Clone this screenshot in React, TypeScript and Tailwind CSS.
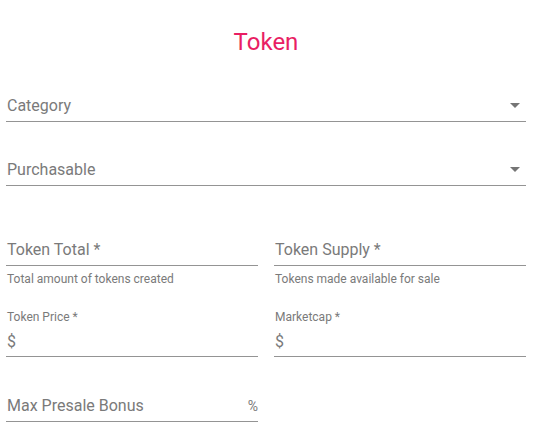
import React from "react"

function ArrowDrop() {
  return (
    <svg viewBox="0 0 24 24" className="h-6 w-6 shrink-0 fill-[#757575]">
      <path d="M7 10l5 5 5-5z" />
    </svg>
  )
}

function SelectField({ label }: { label: string }) {
  return (
    <div className="flex h-[33px] items-center border-b border-[#949494] pl-px">
      <span className="flex-1 pt-[2px] text-base text-[#7a7a7a]">{label}</span>
      <span className="-mr-px">
        <ArrowDrop />
      </span>
    </div>
  )
}

function TextField({ label, helper }: { label: string; helper: string }) {
  return (
    <div className="flex flex-col">
      <div className="flex h-[33px] items-center border-b border-[#949494] pt-[2px] pl-px text-base text-[#7a7a7a]">
        {label}
      </div>
      <p className="mt-[6px] pl-px text-xs leading-[14px] text-[#7a7a7a]">{helper}</p>
    </div>
  )
}

function PriceField({ label }: { label: string }) {
  return (
    <div className="flex flex-col">
      <span className="pl-px text-xs leading-[14px] text-[#7a7a7a]">{label}</span>
      <div className="flex h-[33px] items-center border-b border-[#949494] pt-[3px] pl-px text-base text-[#7a7a7a]">
        $
      </div>
    </div>
  )
}

export default function App() {
  return (
    <div
      className="h-[431px] w-[545px] bg-white pl-[6px] pr-[19px]"
      style={{ fontFamily: "Roboto, 'Liberation Sans', sans-serif" }}
    >
      <h1 className="pt-[26px] text-center text-2xl leading-8 font-normal text-[#e91e63]">
        Token
      </h1>

      <div className="mt-[31px]">
        <SelectField label="Category" />
      </div>
      <div className="mt-[31px]">
        <SelectField label="Purchasable" />
      </div>

      <div className="mt-[47px] grid grid-cols-2 gap-x-4">
        <TextField label="Token Total *" helper="Total amount of tokens created" />
        <TextField label="Token Supply *" helper="Tokens made available for sale" />
      </div>

      <div className="mt-[24px] grid grid-cols-2 gap-x-4">
        <PriceField label="Token Price *" />
        <PriceField label="Marketcap *" />
      </div>

      <div className="mt-[32px] grid grid-cols-2 gap-x-4">
        <div className="flex h-[33px] items-center border-b border-[#949494] pt-[2px] pl-px text-base text-[#7a7a7a]">
          <span className="flex-1">Max Presale Bonus</span>
          <span className="text-sm">%</span>
        </div>
      </div>
    </div>
  )
}
